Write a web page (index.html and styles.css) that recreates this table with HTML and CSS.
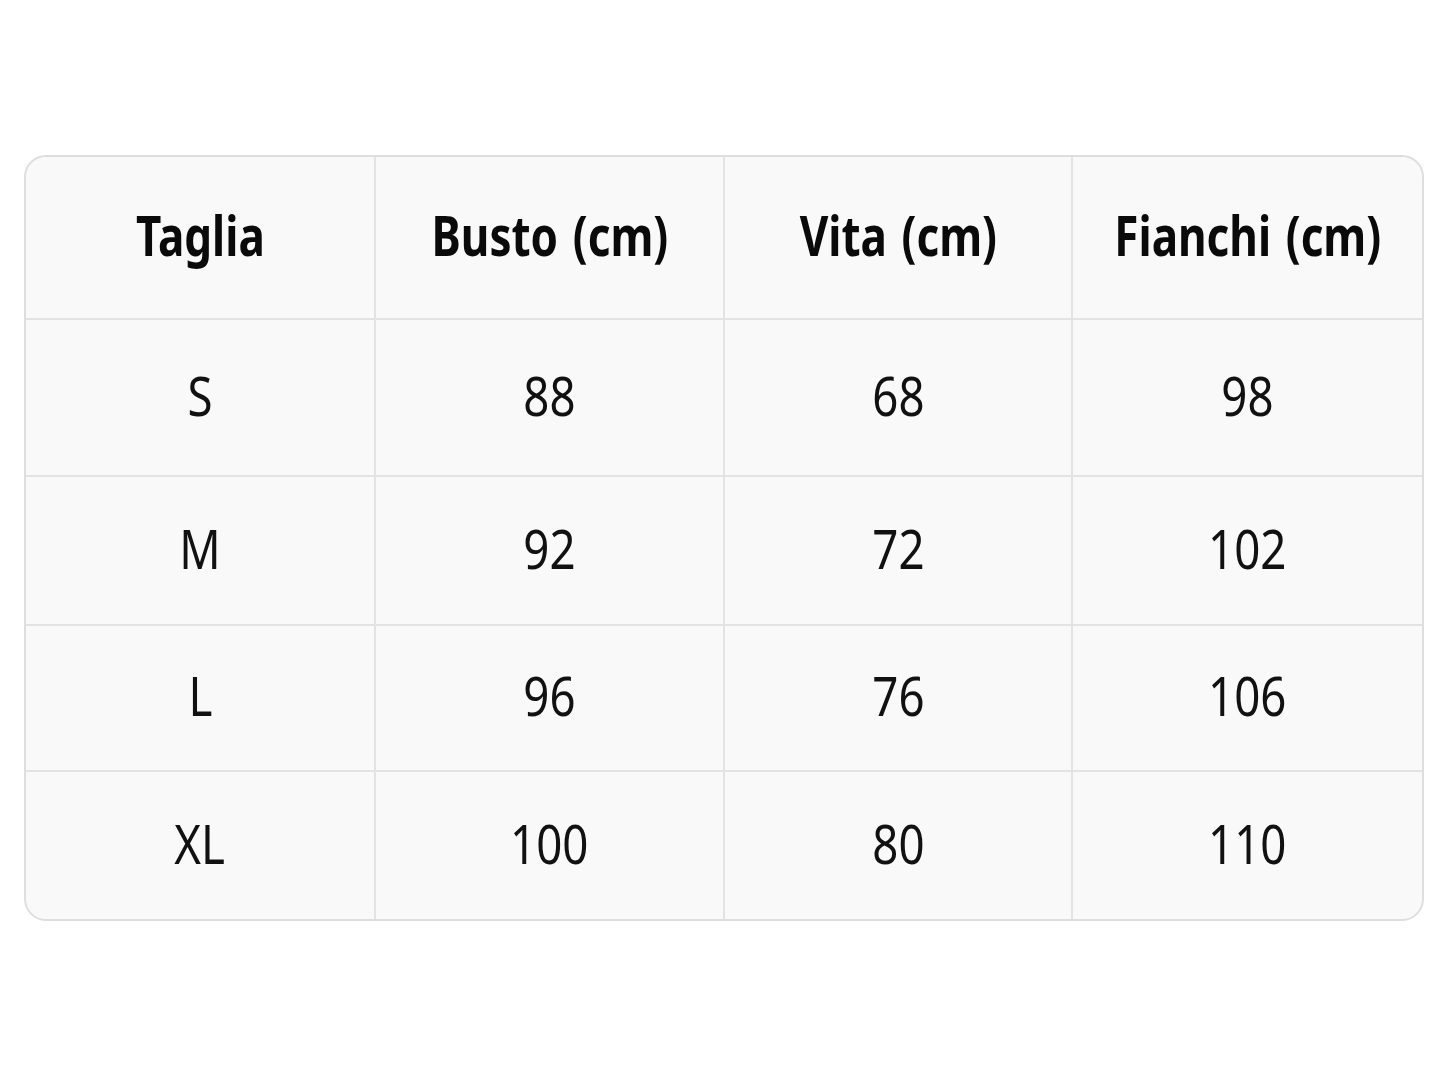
FILE: index.html
```html
<!DOCTYPE html>
<html lang="it">
<head>
<meta charset="utf-8">
<title>Tabella taglie</title>
<link rel="stylesheet" href="styles.css">
</head>
<body>
<div class="size-table">
  <div class="cell head"><span class="txt">Taglia</span></div>
  <div class="cell head"><span class="txt">Busto (cm)</span></div>
  <div class="cell head"><span class="txt">Vita (cm)</span></div>
  <div class="cell head last-col"><span class="txt">Fianchi (cm)</span></div>

  <div class="cell"><span class="txt">S</span></div>
  <div class="cell"><span class="txt">88</span></div>
  <div class="cell"><span class="txt">68</span></div>
  <div class="cell last-col"><span class="txt">98</span></div>

  <div class="cell"><span class="txt">M</span></div>
  <div class="cell"><span class="txt">92</span></div>
  <div class="cell"><span class="txt">72</span></div>
  <div class="cell last-col"><span class="txt">102</span></div>

  <div class="cell"><span class="txt">L</span></div>
  <div class="cell"><span class="txt">96</span></div>
  <div class="cell"><span class="txt">76</span></div>
  <div class="cell last-col"><span class="txt">106</span></div>

  <div class="cell last-row"><span class="txt">XL</span></div>
  <div class="cell last-row"><span class="txt">100</span></div>
  <div class="cell last-row"><span class="txt">80</span></div>
  <div class="cell last-row last-col"><span class="txt">110</span></div>
</div>
</body>
</html>
```

FILE: styles.css
```css
html, body {
  margin: 0;
  padding: 0;
  background: #ffffff;
}

body {
  padding: 155px 24px 0 24px;
  font-family: "Noto Sans", "Open Sans", "DejaVu Sans", sans-serif;
  color: #111111;
}

.size-table {
  display: grid;
  grid-template-columns: 350px 349px 348px 1fr;
  grid-template-rows: 163px 157px 149px 146px 147px;
  width: 1400px;
  box-sizing: border-box;
  border: 2px solid #dedede;
  border-radius: 22px;
  overflow: hidden;
  background: #f9f9f9;
}

.cell {
  display: flex;
  align-items: center;
  justify-content: center;
  padding-bottom: 7px;
  box-sizing: border-box;
  font-size: 55px;
  line-height: 1;
  border-right: 2px solid #e3e3e3;
  border-bottom: 2px solid #e3e3e3;
}

.cell .txt {
  display: inline-block;
  white-space: nowrap;
  transform: scaleX(0.83);
}

.cell.head {
  font-weight: 700;
  color: #0a0a0a;
}

.cell.head .txt {
  transform: scaleX(0.8);
  word-spacing: 4px;
}

.cell.last-col {
  border-right: none;
}

.cell.last-row {
  border-bottom: none;
}
```
